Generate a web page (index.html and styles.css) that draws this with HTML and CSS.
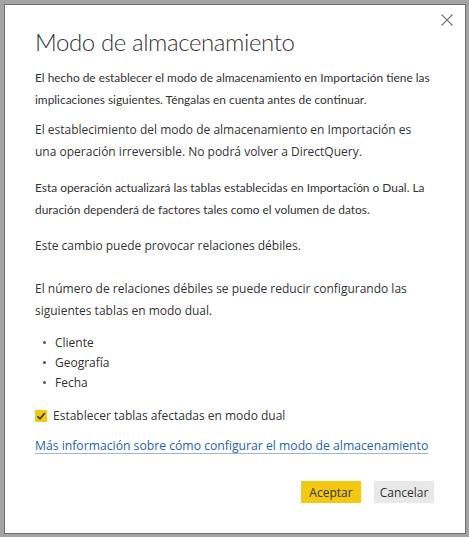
FILE: index.html
```html
<!DOCTYPE html>
<html lang="es">
<head>
<meta charset="utf-8">
<title>Modo de almacenamiento</title>
<link rel="stylesheet" href="styles.css">
</head>
<body>
<div class="dialog">
  <button class="close" aria-label="Cerrar">
    <svg width="12" height="12" viewBox="0 0 12 12"><path d="M0.5 0.5 L11.5 11.5 M11.5 0.5 L0.5 11.5" stroke="#777" stroke-width="1.1" fill="none"/></svg>
  </button>
  <h1 class="title">Modo de almacenamiento</h1>
  <p class="para small p1">El hecho de establecer el modo de almacenamiento en Importación tiene las<br>implicaciones siguientes. Téngalas en cuenta antes de continuar.</p>
  <p class="para p2">El establecimiento del modo de almacenamiento en Importación es<br>una operación irreversible. No podrá volver a DirectQuery.</p>
  <p class="para small p3">Esta operación actualizará las tablas establecidas en Importación o Dual. La<br>duración dependerá de factores tales como el volumen de datos.</p>
  <p class="para p4">Este cambio puede provocar relaciones débiles.</p>
  <p class="para p5">El número de relaciones débiles se puede reducir configurando las<br>siguientes tablas en modo dual.</p>
  <ul class="tables">
    <li>Cliente</li>
    <li>Geografía</li>
    <li>Fecha</li>
  </ul>
  <label class="check">
    <span class="box"><svg width="12" height="12" viewBox="0 0 12 12"><path d="M2.5 6.2 L5 8.7 L9.8 3" stroke="#333" stroke-width="1.6" fill="none"/></svg></span>
    <span>Establecer tablas afectadas en modo dual</span>
  </label>
  <a class="link" href="#">Más información sobre cómo configurar el modo de almacenamiento</a>
  <div class="actions">
    <button class="btn primary">Aceptar</button>
    <button class="btn secondary">Cancelar</button>
  </div>
</div>
</body>
</html>
```

FILE: styles.css
```css
html, body {
  margin: 0;
  padding: 0;
}
body {
  background: #a3a3a3;
  width: 469px;
  height: 537px;
  padding: 4px 0 0 4px;
  box-sizing: border-box;
  font-family: "Open Sans", "Noto Sans", sans-serif;
  color: #333;
}
.dialog {
  position: relative;
  width: 462px;
  height: 530px;
  box-sizing: border-box;
  background: #fff;
  border: 1px solid #6e6e6e;
  padding: 0 0 0 30px;
}
.close {
  position: absolute;
  top: 8px;
  right: 11px;
  width: 14px;
  height: 14px;
  padding: 1px;
  border: 0;
  background: transparent;
  display: flex;
}
.title {
  margin: 21px 0 0 0;
  font-family: "Lato", "Open Sans", sans-serif;
  font-weight: 300;
  font-size: 24px;
  letter-spacing: -0.4px;
  line-height: 32px;
  color: #333;
}
.para {
  margin: 0;
  font-size: 12px;
  line-height: 22px;
  width: 430px;
  white-space: nowrap;
}
.para.small {
  font-family: "Lato", "Open Sans", sans-serif;
  font-size: 11.9px;
}
.p1 { margin-top: 9px; }
.p2 { margin-top: 8px; }
.p3 { margin-top: 14px; }
.p4 { margin-top: 14px; }
.p5 { margin-top: 21px; }
.tables {
  list-style: none;
  margin: 11px 0 0 0;
  padding: 0 0 0 8px;
  font-size: 12px;
  line-height: 20px;
}
.tables li::before {
  content: "";
  display: inline-block;
  width: 3px;
  height: 3px;
  background: #555;
  border-radius: 50%;
  vertical-align: middle;
  margin: 0 9px 2px 0;
}
.check {
  display: flex;
  align-items: center;
  gap: 6px;
  margin-top: 13px;
  font-size: 12px;
  line-height: 20px;
}
.box {
  width: 12px;
  height: 12px;
  background: #f2c811;
  display: flex;
}
.link {
  display: inline-block;
  margin-top: 10px;
  font-size: 12.2px;
  line-height: 20px;
  color: #1b63b5;
  text-decoration: underline;
  text-decoration-color: #9fb3dd;
  text-underline-offset: 3px;
}
.actions {
  display: flex;
  justify-content: flex-end;
  gap: 13px;
  margin-top: 25px;
  padding-right: 31px;
}
.btn {
  width: 60px;
  height: 22px;
  border: 0;
  padding: 0;
  font-family: "Open Sans", "Noto Sans", sans-serif;
  font-size: 12px;
  color: #333;
}
.primary { background: #f2c811; }
.secondary { background: #e8e8e8; }
```
